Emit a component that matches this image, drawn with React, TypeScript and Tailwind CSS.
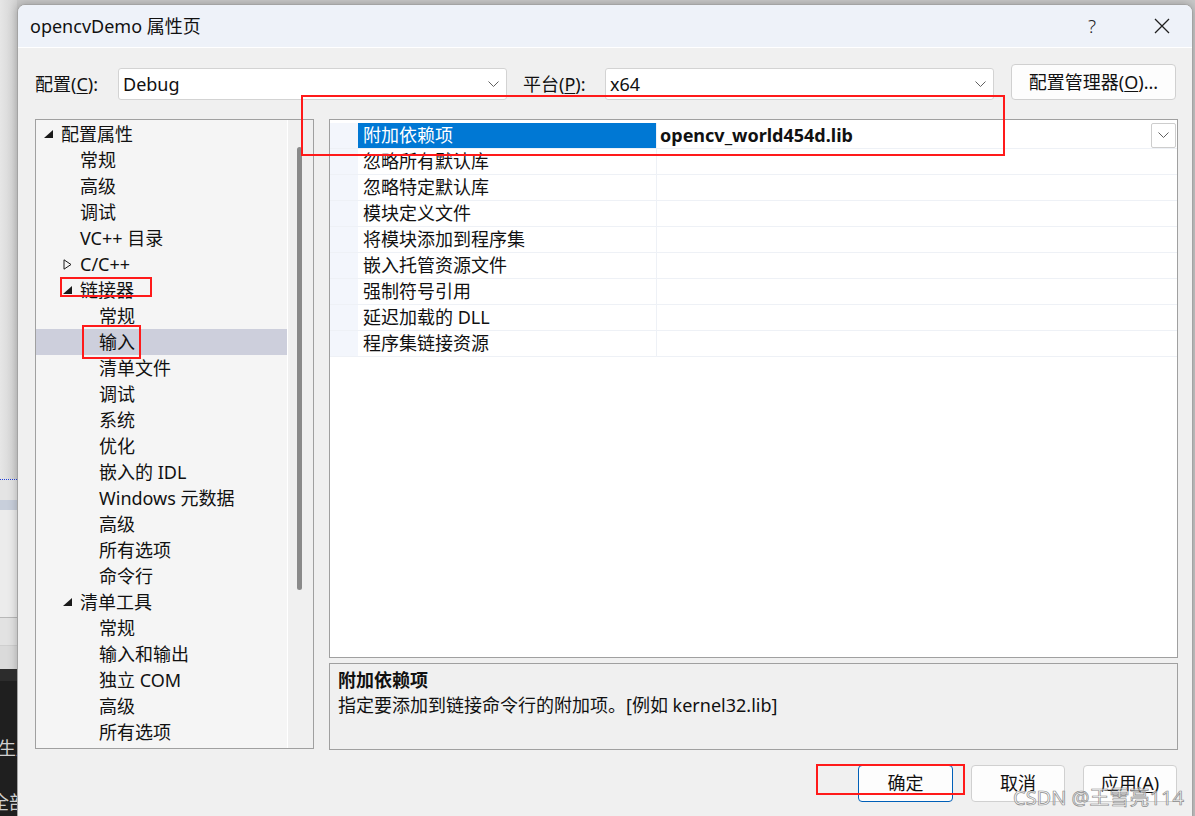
type TreeItem = { label: string; level: 0 | 1 | 2; arrow?: "open" | "closed"; selected?: boolean };

const treeItems: TreeItem[] = [
  { label: "配置属性", level: 0, arrow: "open" },
  { label: "常规", level: 1 },
  { label: "高级", level: 1 },
  { label: "调试", level: 1 },
  { label: "VC++ 目录", level: 1 },
  { label: "C/C++", level: 1, arrow: "closed" },
  { label: "链接器", level: 1, arrow: "open" },
  { label: "常规", level: 2 },
  { label: "输入", level: 2, selected: true },
  { label: "清单文件", level: 2 },
  { label: "调试", level: 2 },
  { label: "系统", level: 2 },
  { label: "优化", level: 2 },
  { label: "嵌入的 IDL", level: 2 },
  { label: "Windows 元数据", level: 2 },
  { label: "高级", level: 2 },
  { label: "所有选项", level: 2 },
  { label: "命令行", level: 2 },
  { label: "清单工具", level: 1, arrow: "open" },
  { label: "常规", level: 2 },
  { label: "输入和输出", level: 2 },
  { label: "独立 COM", level: 2 },
  { label: "高级", level: 2 },
  { label: "所有选项", level: 2 },
];

const indent = ["pl-[8px]", "pl-[27px]", "pl-[46px]"];

const properties = [
  "附加依赖项",
  "忽略所有默认库",
  "忽略特定默认库",
  "模块定义文件",
  "将模块添加到程序集",
  "嵌入托管资源文件",
  "强制符号引用",
  "延迟加载的 DLL",
  "程序集链接资源",
];

function Chevron() {
  return (
    <svg width="11" height="7" viewBox="0 0 11 7" fill="none">
      <polyline points="0.5,0.5 5.5,5.5 10.5,0.5" stroke="#606060" strokeWidth="1" />
    </svg>
  );
}

function Arrow({ kind }: { kind?: "open" | "closed" }) {
  if (kind === "open") {
    return (
      <svg width="9" height="8" viewBox="0 0 9 8">
        <polygon points="9,0 9,8 0,8" fill="#1a1a1a" />
      </svg>
    );
  }
  if (kind === "closed") {
    return (
      <svg width="9" height="11" viewBox="0 0 9 11">
        <polygon points="1,0.8 8,5.5 1,10.2" fill="none" stroke="#1a1a1a" strokeWidth="1" />
      </svg>
    );
  }
  return null;
}

function Combo({ value }: { value: string }) {
  return (
    <div className="mt-[4px] flex h-[32px] w-[389px] items-center justify-between rounded-[3px] border border-[#d3d3d3] bg-white pl-[4px] pr-[7px]">
      <span>{value}</span>
      <Chevron />
    </div>
  );
}

export default function App() {
  return (
    <div className="relative flex h-[816px] w-[1195px] overflow-hidden bg-[#c9c9c9] font-['Noto_Sans','Noto_Sans_CJK_SC',sans-serif] text-[18px] text-[#111]">
      {/* background behind the dialog */}
      <div className="flex w-[17px] shrink-0 flex-col">
        <div className="h-[479px] bg-gradient-to-r from-[#e6e6e6] to-[#d2d2d2]" />
        <div className="h-[21px] border-t border-dotted border-[#2342d8] bg-[#e4e4e4]" />
        <div className="h-[10px] bg-[#c8cfdb]" />
        <div className="h-[107px] bg-[#ececec]" />
        <div className="h-[28px] border-t border-[#b8b8b8] bg-[#e2e2e2]" />
        <div className="h-[24px] border-t border-[#cfcfcf] bg-[#dadada]" />
        <div className="relative flex-1 overflow-hidden bg-[#1f1f1f] text-[#cfcfcf]">
          <div className="h-[12px] bg-[#2c2c2c]" />
          <span className="absolute left-[-2px] top-[66px] whitespace-nowrap">生成</span>
          <span className="absolute left-[-9px] top-[120px] whitespace-nowrap">全部</span>
        </div>
      </div>

      {/* dialog */}
      <div className="mt-[4px] flex h-[830px] w-[1176px] shrink-0 flex-col overflow-hidden rounded-t-[8px] border border-[#a3a3a3] bg-[#f0f0f0] shadow-[0_0_10px_rgba(0,0,0,0.25)]">
        <div className="flex h-[43px] shrink-0 items-center border-b border-white bg-[#eef2f9] pl-[12px]">
          <span className="flex-1">opencvDemo 属性页</span>
          <span className="mr-[58px] text-[19px] font-light text-[#222]">?</span>
          <svg width="16" height="16" viewBox="0 0 16 16" className="mr-[22px]">
            <path d="M1 1 L15 15 M15 1 L1 15" stroke="#1f1f1f" strokeWidth="1.3" />
          </svg>
        </div>

        <div className="flex flex-col pl-[17px] pr-[14px] pt-[16px]">
          {/* configuration row */}
          <div className="flex h-[36px] items-start">
            <span className="mt-[4px] w-[83px] leading-[32px]">
              配置(<span className="underline underline-offset-2">C</span>):
            </span>
            <Combo value="Debug" />
            <span className="ml-[16px] mt-[4px] w-[82px] leading-[32px]">
              平台(<span className="underline underline-offset-2">P</span>):
            </span>
            <Combo value="x64" />
            <button className="ml-[17px] flex h-[36px] w-[165px] items-center justify-center rounded-[4px] border border-[#d0d0d0] bg-[#fdfdfd]">
              配置管理器(<span className="underline underline-offset-2">O</span>)...
            </button>
          </div>

          {/* main area */}
          <div className="mt-[19px] flex h-[631px] gap-[15px]">
            <div className="flex h-[630px] w-[279px] shrink-0 border border-[#a0a0a0]">
              <div className="flex flex-1 flex-col bg-[#f5f5f5] pt-[1px]">
                {treeItems.map((item, i) => (
                  <div
                    key={i}
                    className={`flex h-[26px] shrink-0 items-center ${indent[item.level]} ${item.selected ? "bg-[#cdcfdc]" : ""}`}
                  >
                    <span className="flex w-[17px] items-center">
                      <Arrow kind={item.arrow} />
                    </span>
                    <span className="whitespace-nowrap leading-[26px]">{item.label}</span>
                  </div>
                ))}
              </div>
              <div className="w-[26px] border-l border-white bg-[#f0f0f0] pl-[9px] pt-[27px]">
                <div className="h-[443px] w-[5px] rounded-full bg-[#8a8a8a]" />
              </div>
            </div>

            <div className="flex flex-1 flex-col gap-[5px]">
              <div className="flex h-[539px] flex-col border border-[#a0a0a0] bg-white pt-[3px]">
                {properties.map((name, i) => (
                  <div key={name} className="flex h-[26px] border-b border-[#eef1f6]">
                    <div className="w-[28px] bg-[#f3f6fc]" />
                    <div
                      className={`flex w-[299px] items-center whitespace-nowrap border-r border-[#eef1f6] pl-[5px] ${i === 0 ? "bg-[#0078d4] text-white" : ""}`}
                    >
                      {name}
                    </div>
                    <div className="flex flex-1 items-center justify-between pl-[3px] pr-[1px]">
                      {i === 0 && (
                        <>
                          <span className="font-bold">opencv_world454d.lib</span>
                          <span className="flex h-[25px] w-[25px] items-center justify-center rounded-[2px] border border-[#cdcdcd] bg-white">
                            <Chevron />
                          </span>
                        </>
                      )}
                    </div>
                  </div>
                ))}
              </div>
              <div className="flex h-[87px] flex-col border border-[#a0a0a0] bg-[#f0f0f0] px-[8px] pt-[4px] leading-[25px]">
                <span className="font-bold">附加依赖项</span>
                <span>指定要添加到链接命令行的附加项。[例如 kernel32.lib]</span>
              </div>
            </div>
          </div>

          {/* buttons */}
          <div className="mt-[15px] flex justify-end gap-[18px] pr-[1px]">
            <button className="h-[37px] w-[95px] rounded-[4px] border border-[#005fb8] bg-[#fdfdfd]">确定</button>
            <button className="h-[37px] w-[94px] rounded-[4px] border border-[#d0d0d0] bg-[#fdfdfd]">取消</button>
            <button className="h-[37px] w-[94px] rounded-[4px] border border-[#d0d0d0] bg-[#fdfdfd]">
              应用(<span className="underline underline-offset-2">A</span>)
            </button>
          </div>
        </div>
      </div>

      {/* red annotation boxes */}
      <div className="absolute left-[301px] top-[95px] h-[61px] w-[704px] border-2 border-[#ff1a1a]" />
      <div className="absolute left-[60px] top-[277px] h-[20px] w-[92px] border-2 border-[#ff1a1a]" />
      <div className="absolute left-[82px] top-[325px] h-[34px] w-[59px] border-2 border-[#ff1a1a]" />
      <div className="absolute left-[816px] top-[764px] h-[31px] w-[149px] border-2 border-[#ff1a1a]" />

      {/* watermark */}
      <span className="absolute left-[1013px] top-[783px] whitespace-nowrap text-[20px] text-white/60 [-webkit-text-stroke:0.7px_#8a8a8a]">
        CSDN @王雪亮114
      </span>
    </div>
  );
}
